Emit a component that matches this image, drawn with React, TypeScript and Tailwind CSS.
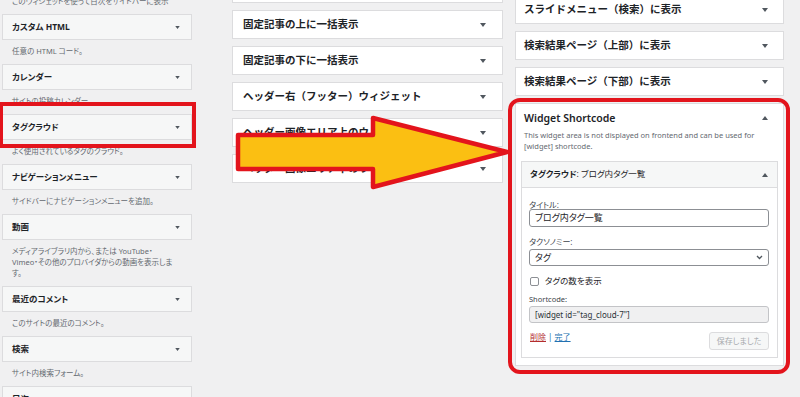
import React from 'react'

const FONT = 'font-["Noto_Sans","Noto_Sans_CJK_JP",sans-serif] [font-feature-settings:"palt"]'

function Down({ className = '' }: { className?: string }) {
  return (
    <svg width="6" height="4" viewBox="0 0 6 4" className={className}>
      <polygon points="0,0 6,0 3,4" fill="#50575e" />
    </svg>
  )
}

function Up({ className = '' }: { className?: string }) {
  return (
    <svg width="6" height="4" viewBox="0 0 6 4" className={className}>
      <polygon points="0,4 6,4 3,0" fill="#50575e" />
    </svg>
  )
}

type AvailableWidget = { title: React.ReactNode; desc: React.ReactNode }

const available: AvailableWidget[] = [
  { title: 'カスタム HTML', desc: '任意の HTML コード。' },
  { title: 'カレンダー', desc: 'サイトの投稿カレンダー。' },
  { title: 'タグクラウド', desc: 'よく使用されているタグのクラウド。' },
  { title: 'ナビゲーションメニュー', desc: 'サイドバーにナビゲーションメニューを追加。' },
  {
    title: '動画',
    desc: (
      <>
        メディアライブラリ内から、または YouTube・
        <br />
        Vimeo・その他のプロバイダからの動画を表示しま
        <br />す。
      </>
    ),
  },
  { title: '最近のコメント', desc: 'このサイトの最近のコメント。' },
  { title: '検索', desc: 'サイト内検索フォーム。' },
  { title: '目次', desc: '' },
]

const middleAreas = [
  '投稿記事の下に一括表示',
  '固定記事の上に一括表示',
  '固定記事の下に一括表示',
  'ヘッダー右（フッター）ウィジェット',
  'ヘッダー画像エリア上のウィジェット',
  'ヘッダー画像エリア下のウィジェット',
]

const rightAreas = ['スライドメニュー（検索）に表示', '検索結果ページ（上部）に表示', '検索結果ページ（下部）に表示']

function LeftColumn() {
  return (
    <div className="ml-[2px] w-[190px] -mt-[10px] flex flex-col shrink-0">
      <p className="pl-[10px] pt-[6px] pb-[7px] text-[7.5px] leading-[11px] text-[#646970]">
        このウィジェットを使って目次をサイドバーに表示
      </p>
      {available.map((w, i) => (
        <div key={i}>
          <div className="h-[26px] bg-[#f6f7f7] border border-[#dcdcde] flex items-center justify-between pl-[9px] pr-[11px]">
            <span className="text-[8.5px] font-bold text-[#1d2327]">{w.title}</span>
            <Down className="w-[5px] h-[3px]" />
          </div>
          {w.desc && (
            <p className="pl-[10px] pt-[6px] pb-[7px] text-[7.5px] leading-[11px] text-[#646970]">{w.desc}</p>
          )}
        </div>
      ))}
    </div>
  )
}

function AreaBox({ title, pl, pr }: { title: string; pl: string; pr: string }) {
  return (
    <div className={`h-[29px] mb-[7px] bg-white border border-[#dcdcde] flex items-center justify-between ${pl} ${pr}`}>
      <span className="text-[10.5px] font-semibold text-[#1d2327] whitespace-nowrap [font-feature-settings:normal]">
        {title}
      </span>
      <Down />
    </div>
  )
}

function MiddleColumn() {
  return (
    <div className="ml-[40px] w-[271px] -mt-[26px] flex flex-col shrink-0">
      {middleAreas.map((t) => (
        <AreaBox key={t} title={t} pl="pl-[10px]" pr="pr-[16px]" />
      ))}
    </div>
  )
}

function RightColumn() {
  return (
    <div className="ml-[12px] w-[269px] -mt-[5px] flex flex-col shrink-0">
      {rightAreas.map((t) => (
        <AreaBox key={t} title={t} pl="pl-[8px]" pr="pr-[15px]" />
      ))}
      <div className="bg-white border border-[#dcdcde] px-[5px] pb-[7px]">
        <div className="flex items-center justify-between pl-[3px] pr-[10px] pt-[8px]">
          <h2 className="text-[10.5px] leading-[12px] font-semibold text-[#1d2327]">Widget Shortcode</h2>
          <Up />
        </div>
        <p className="pl-[3px] mt-[6px] text-[7.5px] leading-[11px] text-[#646970]">
          This widget area is not displayed on frontend and can be used for
          <br />
          [widget] shortcode.
        </p>
        <div className="mt-[9px] border border-[#dcdcde]">
          <div className="h-[26px] bg-[#f6f7f7] border-b border-[#dcdcde] flex items-center justify-between pl-[8px] pr-[9px]">
            <span className="text-[8.5px] text-[#1d2327]">
              <b className="font-bold">タグクラウド</b>: ブログ内タグ一覧
            </span>
            <Up />
          </div>
          <div className="pl-[7px] pr-[8px] pt-[12px] pb-[7px] bg-white text-[#1d2327]">
            <div className="text-[8px] leading-[9px] text-[#3c434a]">タイトル:</div>
            <div className="h-[18px] border border-[#8c8f94] rounded-[3px] bg-white flex items-center px-[5px] text-[9px]">
              ブログ内タグ一覧
            </div>
            <div className="mt-[10px] text-[8px] leading-[9px] text-[#3c434a]">タクソノミー:</div>
            <div className="mt-[3px] h-[17px] border border-[#8c8f94] rounded-[3px] bg-white flex items-center justify-between pl-[5px] pr-[5px] text-[9px]">
              <span>タグ</span>
              <svg width="7" height="5" viewBox="0 0 7 5">
                <polyline points="1,1 3.5,3.5 6,1" fill="none" stroke="#50575e" strokeWidth="1.3" />
              </svg>
            </div>
            <div className="mt-[9px] h-[12px] flex items-center gap-[6px] pl-[1px]">
              <span className="w-[9px] h-[9px] border border-[#8c8f94] rounded-[2px] bg-white" />
              <span className="text-[8.5px]">タグの数を表示</span>
            </div>
            <div className="mt-[8px] text-[7.5px] leading-[9px] text-[#3c434a]">Shortcode:</div>
            <div className="mt-[2px] h-[17px] border border-[#c3c4c7] rounded-[3px] bg-[#f0f0f1] flex items-center px-[5px] text-[8px] text-[#2c3338]">
              [widget id="tag_cloud-7"]
            </div>
            <div className="mt-[9px] flex items-start justify-between">
              <div className="text-[8px] leading-[10px] pl-[1px]">
                <span className="text-[#b32d2e] underline">削除</span>
                <span className="text-[#2271b1]"> | </span>
                <span className="text-[#2271b1] underline">完了</span>
              </div>
              <div className="w-[60px] h-[18px] border border-[#dcdcde] rounded-[3px] bg-[#f6f7f7] flex items-center justify-center text-[8px] text-[#a7aaad]">
                保存しました
              </div>
            </div>
          </div>
        </div>
      </div>
    </div>
  )
}

export default function App() {
  return (
    <div className={`relative w-[800px] h-[397px] overflow-hidden bg-[#f0f0f1] ${FONT}`}>
      <div className="flex items-start">
        <LeftColumn />
        <MiddleColumn />
        <RightColumn />
      </div>

      {/* annotations */}
      <div className="absolute left-[-1px] top-[102px] w-[197px] h-[46px] border-[4px] border-[#e3141c]" />
      <div className="absolute left-[508px] top-[98px] w-[282px] h-[276px] border-[4px] border-[#e3141c] rounded-[12px]" />
      <svg className="absolute left-0 top-0 pointer-events-none" width="800" height="397" viewBox="0 0 800 397">
        <polygon
          points="238,135 373,135 373,118 507,152 373,187 373,169 238,169"
          fill="#fbbf12"
          stroke="#e3141c"
          strokeWidth="4.5"
          strokeLinejoin="round"
        />
      </svg>
    </div>
  )
}
